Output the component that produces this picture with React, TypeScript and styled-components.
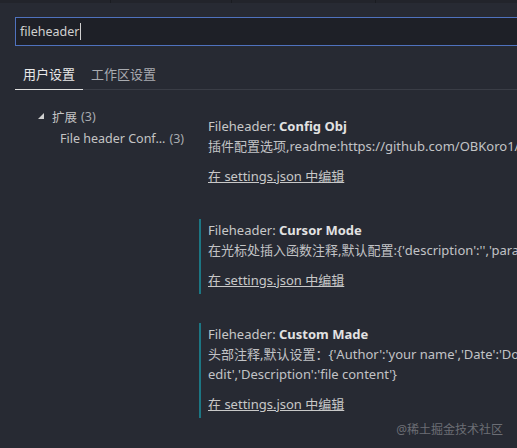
import React from 'react';
import styled, { createGlobalStyle } from 'styled-components';

const GlobalStyle = createGlobalStyle`
  html, body {
    margin: 0;
    padding: 0;
    background: #272a33;
    overflow: hidden;
  }
  body {
    font-family: 'Noto Sans', 'Noto Sans CJK SC', sans-serif;
    color: #cccccc;
  }
`;

interface SettingItem {
  title: string;
  description: string[];
  modified: boolean;
}

const settings: SettingItem[] = [
  {
    title: 'Config Obj',
    description: ['插件配置选项,readme:https://github.com/OBKoro1/koro1FileHeader'],
    modified: false,
  },
  {
    title: 'Cursor Mode',
    description: ["在光标处插入函数注释,默认配置:{'description':'','param':'','return':''}"],
    modified: true,
  },
  {
    title: 'Custom Made',
    description: [
      "头部注释,默认设置：{'Author':'your name','Date':'Do not",
      "edit','Description':'file content'}",
    ],
    modified: true,
  },
];

function App() {
  return (
    <Page>
      <GlobalStyle />
      <TopStrip>
        <StripTab width={110} />
        <StripTab width={120} />
        <StripTab width={143} />
      </TopStrip>
      <SearchBox>
        <SearchText>fileheader</SearchText>
        <Caret />
      </SearchBox>
      <TabBar>
        <Tab active>用户设置</Tab>
        <Tab>工作区设置</Tab>
      </TabBar>
      <Body>
        <Tree>
          <TreeRow indent={38}>
            <Arrow />
            <span>扩展</span>
            <Count>(3)</Count>
          </TreeRow>
          <TreeRow indent={60}>
            <span>File header Conf...</span>
            <Count>(3)</Count>
          </TreeRow>
        </Tree>
        <SettingList>
          {settings.map((s) => (
            <Setting key={s.title} modified={s.modified}>
              <SettingTitle>
                Fileheader: <strong>{s.title}</strong>
              </SettingTitle>
              {s.description.map((line) => (
                <Description key={line}>{line}</Description>
              ))}
              <EditLink>在 settings.json 中编辑</EditLink>
            </Setting>
          ))}
        </SettingList>
      </Body>
      <Watermark>@稀土掘金技术社区</Watermark>
    </Page>
  );
}

const Page = styled.div`
  position: relative;
  width: 517px;
  height: 448px;
  overflow: hidden;
  background: #272a33;
`;

const TopStrip = styled.div`
  display: flex;
  height: 3px;
  background: #22242b;
`;

const StripTab = styled.div<{ width: number }>`
  width: ${({ width }) => width}px;
  border-right: 1px solid #1a1c21;
`;

const SearchBox = styled.div`
  display: flex;
  align-items: center;
  margin: 14px 0 0 15px;
  height: 27px;
  width: 520px;
  border: 1px solid #4f72be;
  background: #1e2027;
  padding-left: 4px;
`;

const SearchText = styled.span`
  font-size: 12.5px;
  color: #d0d0d0;
`;

const Caret = styled.span`
  width: 1px;
  height: 17px;
  background: #d0d0d0;
`;

const TabBar = styled.div`
  display: flex;
  margin: 15px 0 0 15px;
  border-bottom: 1px solid #3a3d46;
`;

const Tab = styled.div<{ active?: boolean }>`
  padding: 3px 8px 6px;
  font-size: 13px;
  color: ${({ active }) => (active ? '#e8e8e8' : '#a9abb0')};
  border-bottom: 1px solid ${({ active }) => (active ? '#e0e0e0' : 'transparent')};
  margin-bottom: -1px;
`;

const Body = styled.div`
  display: flex;
`;

const Tree = styled.div`
  width: 199px;
  padding-top: 15px;
`;

const TreeRow = styled.div<{ indent: number }>`
  display: flex;
  align-items: center;
  gap: 4px;
  height: 22px;
  padding-left: ${({ indent }) => indent}px;
  font-size: 12.5px;
  color: #c4c4c4;
`;

const Arrow = styled.span`
  width: 0;
  height: 0;
  margin-right: 4px;
  border-left: 6px solid transparent;
  border-bottom: 6px solid #d0d0d0;
`;

const Count = styled.span`
  color: #a8aab0;
`;

const SettingList = styled.div`
  display: flex;
  flex-direction: column;
  gap: 29px;
  padding-top: 25px;
  flex: 1;
  min-width: 0;
`;

const Setting = styled.div<{ modified: boolean }>`
  display: flex;
  flex-direction: column;
  padding: 2px 0 4px 7px;
  border-left: 2px solid ${({ modified }) => (modified ? '#1c7683' : 'transparent')};
  white-space: nowrap;
`;

const SettingTitle = styled.div`
  font-size: 13px;
  line-height: 19px;
  color: #c8c8c8;
  strong {
    font-weight: 700;
    color: #e2e2e2;
  }
`;

const Description = styled.div`
  font-size: 13px;
  line-height: 20px;
  color: #c2c3c6;
`;

const EditLink = styled.div`
  margin-top: 10px;
  font-size: 13px;
  line-height: 20px;
  color: #c8c8c8;
  text-decoration: underline;
`;

const Watermark = styled.div`
  position: absolute;
  right: 14px;
  bottom: 10px;
  font-size: 12px;
  color: #6c6e75;
`;

export default App;
